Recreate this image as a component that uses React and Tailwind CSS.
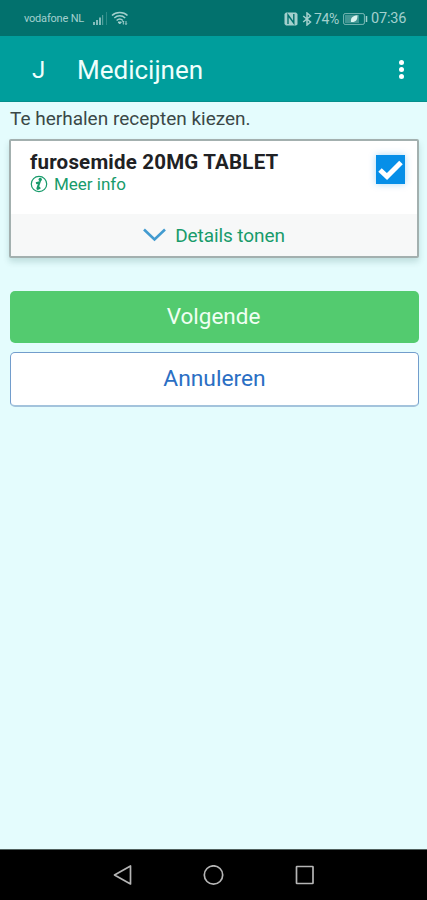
function StatusBar() {
  return (
    <div className="flex h-[36px] shrink-0 items-center bg-[#02716d] pl-6 pr-[20px] pt-[1px] text-[#a3d0cd]">
      <span className="w-[61px] whitespace-nowrap text-[11px] leading-none tracking-[-0.2px]">vodafone NL</span>
      <svg className="ml-[8px] h-[14px] w-[15px]" viewBox="0 0 15 14" fill="currentColor">
        <path d="M0 10h2v3H0zM3 8h2v5H3zM6 5.500h2v7.500H6z" opacity=".8" />
        <path d="M9 3h1.200v10H9z" opacity=".5" />
        <path d="M13 0h.8v13H13z" opacity=".35" />
      </svg>
      <svg className="ml-[3px] h-[15px] w-[18px]" viewBox="0 0 18 15" fill="none" stroke="currentColor" strokeWidth="1.500">
        <path d="M1 4.500C5 .4 12.500.4 16.500 4.500M3.300 7C6.500 4 11 4 14.200 7M5.600 9.500c2-1.800 4.300-1.800 6.300 0" />
        <path d="M7 11l1.700 2 1.700-2z" fill="currentColor" strokeWidth="1" />
        <path d="M12.300 13.500v-3.500M15 10v3.500M11.500 11l.8-1 .8 1M14.200 12.500l.8 1 .8-1" strokeWidth="1" />
      </svg>
      <div className="ml-auto flex items-center">
        <svg className="h-[14px] w-[14px]" viewBox="0 0 14 14">
          <path d="M2 .5h10L13.500 2v10.500L12 13.500H2L.5 12V2z" fill="currentColor" />
          <path d="M4 12V3l5.800 8V2" fill="none" stroke="#02716d" strokeWidth="1.400" />
        </svg>
        <svg className="ml-[4px] h-[14px] w-[10px]" viewBox="0 0 10 14" fill="none" stroke="currentColor" strokeWidth="1.500">
          <path d="M1.200 4l7.300 6L5 13V1l3.500 3-7.300 6" />
        </svg>
        <span className="ml-[2px] w-[25px] whitespace-nowrap text-[14px] leading-none tracking-[-0.4px]">74%</span>
        <svg className="ml-[4px] h-[12px] w-[25px]" viewBox="0 0 25 12">
          <rect x=".6" y=".6" width="20.800" height="10.800" rx="1.500" fill="none" stroke="currentColor" strokeWidth="1" opacity=".75" />
          <path d="M2 2h14v8H2z" fill="currentColor" opacity=".4" />
          <path d="M8 9c-.5-4 1-6 6.500-6.800C14.500 6.500 13 9.500 8 9z" fill="#d8f4ef" />
          <path d="M23.500 3v6" stroke="currentColor" strokeWidth="1.500" />
        </svg>
        <span className="ml-[3px] mt-[1px] w-[36px] whitespace-nowrap text-[14.500px] leading-none tracking-[-0.2px]">07:36</span>
      </div>
    </div>
  );
}

function AppBar() {
  return (
    <header className="flex h-[66px] shrink-0 items-center border-b border-[#058f8c] bg-[#009e9c] pl-8 pr-[23px] text-[#effffc]">
      <span className="mt-[2px] w-[45px] text-[24px] leading-none">J</span>
      <h1 className="mt-[3px] text-[26px] leading-none">Medicijnen</h1>
      <div className="ml-auto mt-[2px] flex flex-col gap-[2px]">
        <i className="size-[5px] rounded-full bg-white" />
        <i className="size-[5px] rounded-full bg-white" />
        <i className="size-[5px] rounded-full bg-white" />
      </div>
    </header>
  );
}

function PrescriptionCard() {
  return (
    <section className="mt-[8px] flex h-[119px] flex-col rounded-[2px] border-2 border-[#a3b0af] bg-white shadow-[0_4px_6px_rgba(0,70,60,0.16)]">
      <div className="flex h-[73px] justify-between pl-[19px] pr-[12px]">
        <div className="pt-[9px]">
          <h2 className="whitespace-nowrap text-[20.500px] font-bold leading-[24px] tracking-[0.2px] text-[#202124]">furosemide 20MG TABLET</h2>
          <a className="flex items-center gap-[6px] text-[17px] leading-[20px] text-[#189b6b]">
            <svg className="size-[18px]" viewBox="0 0 18 18" fill="none" stroke="currentColor">
              <circle cx="9" cy="9" r="7.700" strokeWidth="1.200" />
              <circle cx="10.200" cy="4.500" r="1.700" fill="currentColor" stroke="none" />
              <path d="M6 8.200l3.500-1-2 6c-.3 1.200.8.800 2.700-.8" strokeWidth="2.100" />
            </svg>
            Meer info
          </a>
        </div>
        <div className="mt-[14px] flex size-[29px] items-center justify-center bg-[#068fe8] shadow-[0_0_7px_rgba(6,143,232,0.35)]">
          <svg className="h-[21px] w-[25px]" viewBox="0 0 25 21" fill="none" stroke="white" strokeWidth="5">
            <path d="M2 11l7 6.500L23 3.500" />
          </svg>
        </div>
      </div>
      <div className="flex flex-1 items-center justify-center gap-[9px] bg-[#f7f8f8] text-[#189b6b]">
        <svg className="h-[14px] w-[23px]" viewBox="0 0 23 14" fill="none" stroke="#429bd0" strokeWidth="2.600">
          <path d="M1 1.500l10.500 10L22 1.500" />
        </svg>
        <span className="text-[19px] leading-none tracking-[-0.08px]">Details tonen</span>
      </div>
    </section>
  );
}

function NavBar() {
  return (
    <nav className="flex h-[51px] shrink-0 items-center justify-between border-t border-[#52615f] bg-black pl-[112px] pr-[112px]">
      <svg className="size-[21px]" viewBox="0 0 21 21" fill="none" stroke="#b5b5b5" strokeWidth="1.700" strokeLinejoin="round">
        <path d="M2.500 10L18.500 1v18z" />
      </svg>
      <svg className="size-[21px]" viewBox="0 0 21 21" fill="none" stroke="#b5b5b5" strokeWidth="1.700">
        <circle cx="10.500" cy="10" r="9.200" />
      </svg>
      <svg className="size-[21px]" viewBox="0 0 21 21" fill="none" stroke="#b5b5b5" strokeWidth="1.700">
        <rect x="2.500" y="1.500" width="16.500" height="17" rx=".5" />
      </svg>
    </nav>
  );
}

export default function App() {
  return (
    <div className="flex h-[900px] w-[427px] flex-col overflow-hidden bg-[#e4fcfd] font-[Roboto,sans-serif]">
      <StatusBar />
      <AppBar />
      <main className="flex flex-1 flex-col pl-[9px] pr-[8px]">
        <p className="mt-[5px] pl-[1px] text-[19px] leading-[24px] text-[#3b4847]">Te herhalen recepten kiezen.</p>
        <PrescriptionCard />
        <button className="ml-[1px] mt-[33px] h-[52px] rounded-[5px] bg-[#53cb6f] pb-[1px] pr-[2px] text-[22.500px] leading-none text-[#effff2]">Volgende</button>
        <button className="ml-[1px] mt-[9px] h-[55px] rounded-[5px] border-[1.500px] border-b-2 border-[#729dcc] border-b-[#a3c3dc] bg-white text-[22.800px] leading-none text-[#2b6fc4]">Annuleren</button>
      </main>
      <NavBar />
    </div>
  );
}
